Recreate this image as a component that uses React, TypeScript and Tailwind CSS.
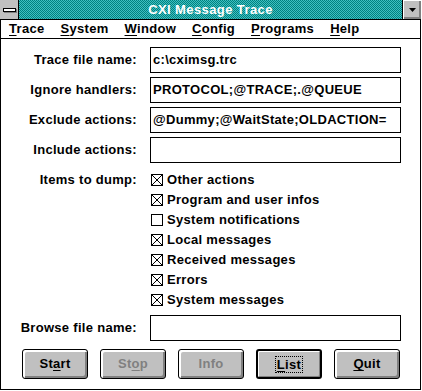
import React from "react";

const U = ({ children }: { children: React.ReactNode }) => (
  <span className="underline decoration-1 underline-offset-2">{children}</span>
);

function Field({ label, value }: { label: string; value: string }) {
  return (
    <div className="flex items-center h-[26px]">
      <div className="w-[136px] text-right whitespace-nowrap">{label}</div>
      <div className="ml-[13px] w-[251px] h-[26px] border border-black flex items-center pl-[2px] whitespace-nowrap overflow-hidden">
        {value}
      </div>
    </div>
  );
}

function Check({ checked, label }: { checked: boolean; label: string }) {
  return (
    <div className="flex items-center h-[20px]">
      <div className="ml-[1px] w-[12px] h-[12px] border border-black bg-white relative">
        {checked && (
          <svg width="10" height="10" viewBox="0 0 10 10" className="absolute left-0 top-0">
            <path d="M0 0 L10 10 M10 0 L0 10" stroke="black" strokeWidth="1" shapeRendering="crispEdges" />
          </svg>
        )}
      </div>
      <span className="ml-[4px] whitespace-nowrap">{label}</span>
    </div>
  );
}

function Btn({
  children,
  disabled,
  isDefault,
  focus,
}: {
  children: React.ReactNode;
  disabled?: boolean;
  isDefault?: boolean;
  focus?: boolean;
}) {
  return (
    <div
      className={
        "w-[66px] h-[30px] bg-[#c0c0c0] rounded-[3px] flex items-center justify-center " +
        (isDefault
          ? "border-2 border-black shadow-[inset_1px_1px_0_#fff,inset_-1px_-1px_0_#808080]"
          : "border border-black shadow-[inset_1px_1px_0_#fff,inset_2px_2px_0_#fff,inset_-1px_-1px_0_#808080,inset_-2px_-2px_0_#808080]") +
        (disabled ? " text-[#808080]" : " text-black")
      }
    >
      <span className={focus ? "outline outline-1 outline-dotted outline-black outline-offset-0 px-[1px] leading-[15px]" : ""}>
        {children}
      </span>
    </div>
  );
}

export default function App() {
  return (
    <div
      className="w-[422px] h-[391px] bg-white text-black text-[13px] font-bold tracking-[0.3px]"
      style={{ fontFamily: '"Liberation Sans", Arial, sans-serif' }}
    >
      <div className="w-[421px] h-[390px] flex flex-col border-b border-black">
        {/* Title bar */}
        <div className="h-[20px] flex border-b border-black">
          <div className="w-[19px] h-[19px] bg-[#c0c0c0] border-r border-black flex items-center justify-center">
            <div className="w-[13px] h-[4px] bg-white border border-black shadow-[1px_1px_0_#808080]" />
          </div>
          <div className="flex-1 flex items-center justify-center bg-[repeating-conic-gradient(#008080_0%_25%,#40c0c0_0%_50%)] bg-size-[2px_2px] text-white tracking-[0.4px]">
            CXI Message Trace
          </div>
          <div className="w-[19px] h-[19px] bg-[#c0c0c0] border-l border-black shadow-[inset_1px_1px_0_#fff,inset_-1px_-1px_0_#808080,inset_-2px_-2px_0_#808080] flex items-center justify-center">
            <svg width="7" height="4" viewBox="0 0 7 4">
              <path d="M0 0 H7 L3.5 4 Z" fill="black" />
            </svg>
          </div>
        </div>
        {/* Menu bar */}
        <div className="h-[19px] flex items-center gap-4 pl-[8px] border-b border-l border-r border-black">
          <span><U>T</U>race</span>
          <span><U>S</U>ystem</span>
          <span><U>W</U>indow</span>
          <span><U>C</U>onfig</span>
          <span><U>P</U>rograms</span>
          <span><U>H</U>elp</span>
        </div>
        {/* Body */}
        <div className="flex-1 border-l border-r border-black pt-[8px] flex flex-col">
          <div className="flex flex-col gap-[4px]">
            <Field label="Trace file name:" value="c:\cximsg.trc" />
            <Field label="Ignore handlers:" value="PROTOCOL;@TRACE;.@QUEUE" />
            <Field label="Exclude actions:" value="@Dummy;@WaitState;OLDACTION=" />
            <Field label="Include actions:" value="" />
          </div>
          <div className="flex mt-[7px]">
            <div className="w-[136px] text-right h-[20px] flex items-center justify-end">Items to dump:</div>
            <div className="ml-[13px] flex flex-col">
              <Check checked label="Other actions" />
              <Check checked label="Program and user infos" />
              <Check checked={false} label="System notifications" />
              <Check checked label="Local messages" />
              <Check checked label="Received messages" />
              <Check checked label="Errors" />
              <Check checked label="System messages" />
            </div>
          </div>
          <div className="mt-[5px]">
            <Field label="Browse file name:" value="" />
          </div>
          <div className="mt-[8px] pl-[21px] flex gap-[12px]">
            <Btn>St<U>a</U>rt</Btn>
            <Btn disabled>St<U>o</U>p</Btn>
            <Btn disabled>Info</Btn>
            <Btn isDefault focus><U>L</U>ist</Btn>
            <Btn><U>Q</U>uit</Btn>
          </div>
        </div>
      </div>
    </div>
  );
}
